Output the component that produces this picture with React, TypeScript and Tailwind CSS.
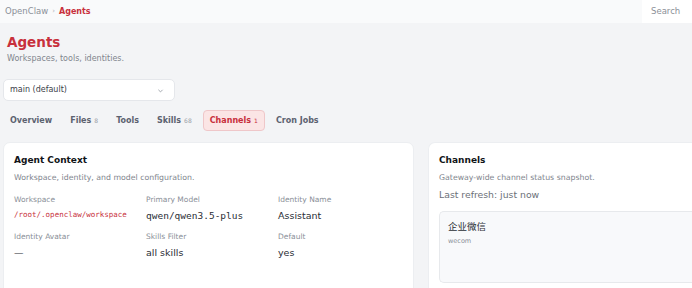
import React from "react";

const sans = { fontFamily: '"DejaVu Sans", "Noto Sans CJK SC", sans-serif' };
const mono = { fontFamily: '"DejaVu Sans Mono", monospace' };

function Field({ label, value, valueClass, monoVal }: { label: string; value: string; valueClass?: string; monoVal?: boolean }) {
  return (
    <div className="flex flex-col gap-[4px]">
      <div className="text-[7.5px] text-[#8a8f98]">{label}</div>
      <div className={valueClass} style={monoVal ? mono : undefined}>{value}</div>
    </div>
  );
}

export default function App() {
  return (
    <div className="w-[692px] h-[288px] overflow-hidden bg-[#f3f4f6] text-[#1f2328]" style={sans}>
      <div className="h-[23px] bg-[#f9fafb] flex items-center justify-between pl-[5px]">
        <div className="flex items-center gap-[4px] text-[8.5px]">
          <span className="text-[#8b9098]">OpenClaw</span>
          <span className="text-[#b0b4ba] text-[7px]">›</span>
          <span className="text-[#c8303c] font-bold text-[8px]">Agents</span>
        </div>
        <div className="h-[23px] w-[50px] bg-white flex items-center pl-[9px] text-[8.5px] text-[#8b9098]">Search</div>
      </div>

      <div className="pl-[7px] pt-[10px]">
        <div className="text-[13.5px] font-bold text-[#c8303c] leading-[18px]">Agents</div>
        <div className="text-[8px] text-[#80858d] mt-[2px]">Workspaces, tools, identities.</div>
      </div>

      <div className="ml-[3px] mt-[14px] w-[172px] h-[22px] bg-white rounded-[5px] border border-[#e5e7eb] flex items-center justify-between px-[6px]">
        <span className="text-[8px] text-[#3b4048]">main (default)</span>
        <svg width="7" height="7" viewBox="0 0 10 10" className="mr-[4px]"><path d="M2 4l3 3 3-3" stroke="#9aa0a8" strokeWidth="1.3" fill="none" /></svg>
      </div>

      <div className="flex items-center mt-[9px] ml-[3px] gap-[4px] text-[8px] font-bold text-[#5c6270]">
        <div className="px-[7px] h-[21px] flex items-center">Overview</div>
        <div className="px-[7px] h-[21px] flex items-center gap-[3px]">Files <span className="text-[6px] font-normal text-[#9aa0a8]">8</span></div>
        <div className="px-[7px] h-[21px] flex items-center">Tools</div>
        <div className="px-[7px] h-[21px] flex items-center gap-[3px]">Skills <span className="text-[6px] font-normal text-[#9aa0a8]">68</span></div>
        <div className="px-[6px] h-[21px] flex items-center gap-[3px] bg-[#fbe5e5] border border-[#efc7c9] rounded-[4px] text-[#c8303c]">Channels <span className="text-[6px] font-normal">1</span></div>
        <div className="px-[7px] h-[21px] flex items-center">Cron Jobs</div>
      </div>

      <div className="flex gap-[14px] mt-[11px] ml-[3px]">
        <div className="w-[411px] h-[160px] bg-white rounded-[7px] border border-[#eceef1] px-[10px] pt-[11px]">
          <div className="text-[9px] font-bold text-[#111418]">Agent Context</div>
          <div className="text-[7.8px] text-[#80858d] mt-[4px]">Workspace, identity, and model configuration.</div>
          <div className="grid grid-cols-[132px_132px_1fr] gap-y-[7px] mt-[11px]">
            <Field label="Workspace" value="/root/.openclaw/workspace" valueClass="text-[7.5px] text-[#c8303c]" monoVal />
            <Field label="Primary Model" value="qwen/qwen3.5-plus" valueClass="text-[9.5px] text-[#2a2e35]" monoVal />
            <Field label="Identity Name" value="Assistant" valueClass="text-[9.5px] text-[#2a2e35]" />
            <Field label="Identity Avatar" value="—" valueClass="text-[9.5px] text-[#2a2e35]" />
            <Field label="Skills Filter" value="all skills" valueClass="text-[9.5px] text-[#2a2e35]" />
            <Field label="Default" value="yes" valueClass="text-[9.5px] text-[#2a2e35]" />
          </div>
        </div>
        <div className="flex-1 h-[160px] bg-white rounded-l-[7px] border border-r-0 border-[#eceef1] pl-[10px] pt-[11px]">
          <div className="text-[9px] font-bold text-[#111418]">Channels</div>
          <div className="text-[7.8px] text-[#80858d] mt-[4px]">Gateway-wide channel status snapshot.</div>
          <div className="text-[9.3px] text-[#6b7078] mt-[5px]">Last refresh: just now</div>
          <div className="mt-[9px] h-[72px] bg-[#f8f9fb] border border-r-0 border-[#e7e9ec] rounded-l-[5px] pl-[8px] pt-[7px]">
            <div className="text-[9.5px] text-[#2a2e35]" style={{ fontFamily: '"Noto Sans CJK SC", sans-serif' }}>企业微信</div>
            <div className="text-[6.5px] text-[#8a8f98] mt-[4px]">wecom</div>
          </div>
        </div>
      </div>
    </div>
  );
}
